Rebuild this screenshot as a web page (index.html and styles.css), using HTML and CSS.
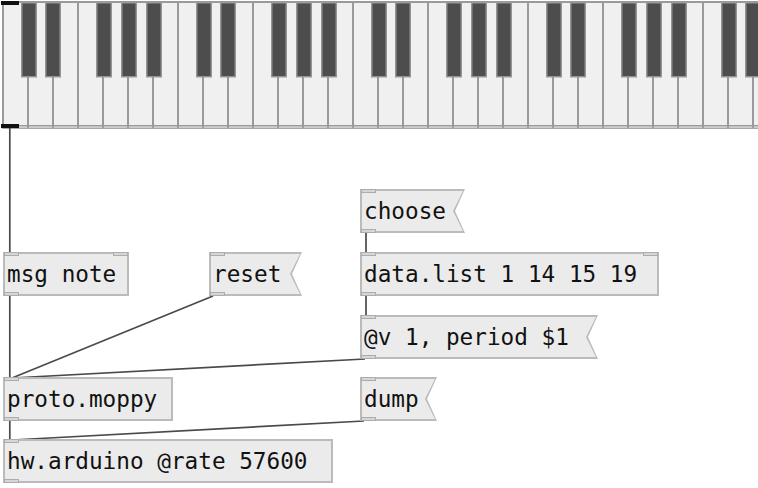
FILE: index.html
```html
<!DOCTYPE html>
<html lang="en">
<head>
    <meta charset="UTF-8">
    <title>moppy patch</title>
    <link rel="stylesheet" href="styles.css">
</head>
<body>

    <div class="patch">
        <!-- keyboard (one octave pattern repeated) -->
        <svg class="keyboard" width="758" height="132">
            <defs>
                <pattern id="octave" x="2" y="0" width="175" height="132" patternUnits="userSpaceOnUse">
                    <rect x="0" y="0" width="2" height="132" fill="#9a9a9a"/>
                    <rect x="25" y="0" width="2" height="132" fill="#9a9a9a"/>
                    <rect x="50" y="0" width="2" height="132" fill="#9a9a9a"/>
                    <rect x="75" y="0" width="2" height="132" fill="#9a9a9a"/>
                    <rect x="100" y="0" width="2" height="132" fill="#9a9a9a"/>
                    <rect x="125" y="0" width="2" height="132" fill="#9a9a9a"/>
                    <rect x="150" y="0" width="2" height="132" fill="#9a9a9a"/>
                    <rect x="19.75" y="2.75" width="14.5" height="74" fill="#4d4d4d" stroke="#959595" stroke-width="1.5"/>
                    <rect x="43.75" y="2.75" width="14.5" height="74" fill="#4d4d4d" stroke="#959595" stroke-width="1.5"/>
                    <rect x="94.75" y="2.75" width="14.5" height="74" fill="#4d4d4d" stroke="#959595" stroke-width="1.5"/>
                    <rect x="119.75" y="2.75" width="14.5" height="74" fill="#4d4d4d" stroke="#959595" stroke-width="1.5"/>
                    <rect x="144.75" y="2.75" width="14.5" height="74" fill="#4d4d4d" stroke="#959595" stroke-width="1.5"/>
                </pattern>
            </defs>
            <rect x="2" y="1" width="756" height="127" fill="#f0f0f0"/>
            <rect x="2" y="1" width="756" height="127" fill="url(#octave)"/>
            <rect x="2" y="1" width="756" height="2" fill="#9a9a9a"/>
            <rect x="2" y="125" width="756" height="1.5" fill="#9a9a9a"/>
            <rect x="2" y="127.5" width="756" height="1.5" fill="#a8a8a8"/>
            <rect x="1" y="1" width="18" height="4" fill="#111"/>
            <rect x="1" y="124" width="18" height="4" fill="#111"/>
        </svg>

        <!-- patch cords -->
        <svg class="wires" width="758" height="488">
            <line x1="9.8" y1="128" x2="9.8" y2="253"/>
            <line x1="9.8" y1="295" x2="9.8" y2="378"/>
            <line x1="213" y1="296" x2="12" y2="378"/>
            <line x1="365" y1="359" x2="12" y2="378"/>
            <line x1="9.8" y1="421" x2="9.8" y2="440"/>
            <line x1="364" y1="421" x2="12" y2="440"/>
            <line x1="366" y1="233" x2="366" y2="253"/>
            <line x1="366" y1="295" x2="366" y2="316"/>
        </svg>

        <div class="box obj n-note">
            <span class="port in"></span><span class="port in right"></span>
            <span class="label">msg note</span>
            <span class="port out"></span>
        </div>

        <div class="box msg n-reset">
            <span class="port in"></span>
            <span class="label">reset</span>
            <span class="port out"></span>
        </div>

        <div class="box msg n-choose">
            <span class="port in"></span>
            <span class="label">choose</span>
            <span class="port out"></span>
        </div>

        <div class="box obj n-list">
            <span class="port in"></span><span class="port in right"></span>
            <span class="label">data.list 1 14 15 19</span>
            <span class="port out"></span>
        </div>

        <div class="box msg n-period">
            <span class="port in"></span>
            <span class="label">@v 1, period $1</span>
            <span class="port out"></span>
        </div>

        <div class="box obj n-moppy">
            <span class="port in"></span>
            <span class="label">proto.moppy</span>
            <span class="port out"></span>
        </div>

        <div class="box msg n-dump">
            <span class="port in"></span>
            <span class="label">dump</span>
            <span class="port out"></span>
        </div>

        <div class="box obj n-arduino">
            <span class="port in"></span>
            <span class="label">hw.arduino @rate 57600</span>
            <span class="port out"></span>
        </div>
    </div>

</body>
</html>
```

FILE: styles.css
```css
/* Page */
body {
    margin: 0;
    background-color: #ffffff;
    font-family: "DejaVu Sans Mono", "Liberation Mono", monospace;
    overflow: hidden;
}

/* Patch canvas */
.patch {
    position: relative;
    width: 758px;
    height: 488px;
}

.keyboard {
    display: block;
}

.wires {
    position: absolute;
    top: 0;
    left: 0;
    pointer-events: none;
}

.wires line {
    stroke: #4a4a4a;
    stroke-width: 1.7;
}

/* Boxes */
.box {
    position: absolute;
    height: 44px;
    box-sizing: border-box;
    display: flex;
    align-items: center;
    padding-bottom: 1px;
    font-size: 22.7px;
    line-height: 26px;
    color: #111;
    white-space: pre;
}

.obj {
    background-color: #ebebeb;
    border: 2px solid #bbbbbb;
    padding-left: 2px;
}

/* Message boxes: flag shape */
.msg {
    background-color: #bbbbbb;
    padding-left: 4px;
    clip-path: polygon(0 0, 100% 0, calc(100% - 10px) 50%, 100% 100%, 0 100%);
}

.msg::before {
    content: "";
    position: absolute;
    top: 2px;
    left: 2px;
    right: 2px;
    bottom: 2px;
    background-color: #ebebeb;
    clip-path: polygon(0 0, 100% 0, calc(100% - 10px) 50%, 100% 100%, 0 100%);
}

.label {
    position: relative;
}

/* Inlets and outlets */
.port {
    position: absolute;
    left: -1px;
    width: 15px;
    height: 4px;
    box-sizing: border-box;
    background-color: #d6d6d6;
    border: 1px solid #acacac;
}

.port.in { top: -2px; }
.port.out { bottom: -2px; }
.port.right { left: auto; right: -1px; }

.msg .port { left: 1px; }
.msg .port.in { top: 0; }
.msg .port.out { bottom: 0; }

/* Node placement */
.n-note    { left: 3px;   top: 252px; width: 126px; }
.n-reset   { left: 209px; top: 252px; width: 93px; }
.n-choose  { left: 360px; top: 189px; width: 105px; }
.n-list    { left: 360px; top: 252px; width: 299px; }
.n-period  { left: 360px; top: 315px; width: 238px; }
.n-moppy   { left: 3px;   top: 377px; width: 170px; }
.n-dump    { left: 360px; top: 377px; width: 77px; }
.n-arduino { left: 3px;   top: 439px; width: 330px; }
```
